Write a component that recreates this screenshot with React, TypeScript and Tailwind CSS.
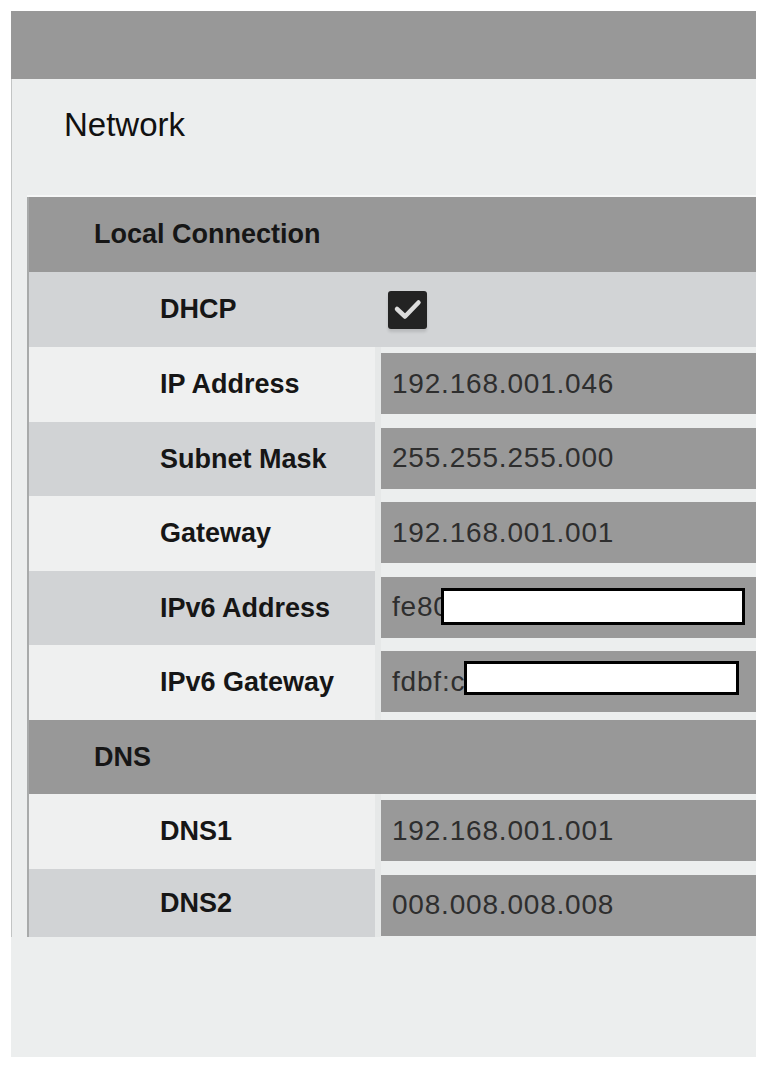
import React from "react";

type Row = {
  label: string;
  value?: string;
  dark: boolean;
  h: string;
  redact?: "a" | "b";
  check?: boolean;
};

const font = { fontFamily: '"Liberation Sans", Arial, sans-serif' };

function Check() {
  return (
    <div className="ml-[7px] w-[39px] h-[38px] rounded-[3px] bg-[#232323] shadow-[0_3px_3px_rgba(0,0,0,0.12)] flex items-center justify-center">
      <svg width="39" height="38" viewBox="0 0 39 38">
        <path d="M9 18 L17 25.5 L30.5 11.5" fill="none" stroke="#dcdcdc" strokeWidth="4.5" strokeLinecap="round" strokeLinejoin="round" />
      </svg>
    </div>
  );
}

function DataRow({ r }: { r: Row }) {
  if (r.check) {
    return (
      <div className={`flex flex-col ${r.h} bg-[#d2d4d6]`}>
        <div className="flex flex-1">
          <div className="w-[352px] flex items-center pl-[131px] text-[27px] font-bold text-[#161616]">{r.label}</div>
          <div className="flex-1 flex items-center">
            <Check />
          </div>
        </div>
      </div>
    );
  }
  return (
    <div className={`flex ${r.h} bg-[#eceeee]`}>
      <div
        className={`w-[346px] flex items-center pl-[131px] text-[27px] font-bold text-[#161616] ${
          r.dark ? "bg-[#d1d3d5]" : "bg-[#eff0f0]"
        }`}
      >
        {r.label}
      </div>
      <div className="w-[6px] bg-[#e6e8e8]" />
      <div className="flex-1 pt-[6px]">
        <div className="relative h-[61px] bg-[#999999] flex items-center pl-[11px] text-[28px] tracking-[0.8px] text-[#2e2e2e]">
          {r.value}
          {r.redact === "a" && (
            <div className="absolute left-[60px] top-[11px] w-[304px] h-[37px] bg-white border-[3px] border-black" />
          )}
          {r.redact === "b" && (
            <div className="absolute left-[83px] top-[10px] w-[275px] h-[34px] bg-white border-[3px] border-black" />
          )}
        </div>
      </div>
    </div>
  );
}

function Header({ title, h }: { title: string; h: string }) {
  return (
    <div className={`${h} bg-[#989898] flex items-center pl-[65px] text-[27px] font-bold text-[#161616]`}>
      {title}
    </div>
  );
}

export default function App() {
  const local: Row[] = [
    { label: "DHCP", dark: true, h: "h-[75px]", check: true },
    { label: "IP Address", value: "192.168.001.046", dark: false, h: "h-[74.5px]" },
    { label: "Subnet Mask", value: "255.255.255.000", dark: true, h: "h-[74.5px]" },
    { label: "Gateway", value: "192.168.001.001", dark: false, h: "h-[74.5px]" },
    { label: "IPv6 Address", value: "fe80::", dark: true, h: "h-[74.5px]", redact: "a" },
    { label: "IPv6 Gateway", value: "fdbf:c", dark: false, h: "h-[74.5px]", redact: "b" },
  ];
  const dns: Row[] = [
    { label: "DNS1", value: "192.168.001.001", dark: false, h: "h-[74.5px]" },
    { label: "DNS2", value: "008.008.008.008", dark: true, h: "h-[68.5px]" },
  ];
  return (
    <div className="w-[768px] h-[1067px] bg-white pt-[11px] pl-[11px]" style={font}>
      <div className="w-[745px] h-[1046px] bg-[#eceeee] flex flex-col">
        <div className="h-[68px] bg-[#989898]" />
        <div className="flex-1 border-l border-[#c2c4c4] flex flex-col">
          <div className="h-[111px] pt-[27px] pl-[52px] text-[33px] leading-[38px] text-[#111]">Network</div>
          <div className="h-[7px] ml-[15px] border-b-2 border-[#f6f7f7]" />
          <div className="ml-[15px] border-l-2 border-[#a8aaaa] flex flex-col">
            <Header title="Local Connection" h="h-[75px]" />
            {local.map((r) => (
              <DataRow key={r.label} r={r} />
            ))}
            <Header title="DNS" h="h-[74.5px]" />
            {dns.map((r) => (
              <DataRow key={r.label} r={r} />
            ))}
          </div>
        </div>
        <div className="h-[120px] bg-[#eceeee]" />
      </div>
    </div>
  );
}
